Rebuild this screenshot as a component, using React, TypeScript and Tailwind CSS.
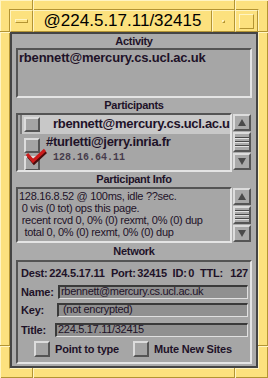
import React from 'react';

const RAISED =
  'border-2 border-t-[#dcdcdc] border-l-[#dcdcdc] border-b-[#555555] border-r-[#555555]';
const INSET =
  'border-2 border-t-[#545454] border-l-[#545454] border-b-[#e4e4e4] border-r-[#e4e4e4]';
const YRAISED =
  'border border-t-[#fff4c2] border-l-[#fff4c2] border-b-[#b39433] border-r-[#b39433]';
const TXT = 'text-[#1e1228]';

function Arrow({ down }: { down?: boolean }) {
  return (
    <div className={`h-[17px] w-[18px] flex items-center justify-center bg-[#a9a9a9] ${RAISED}`}>
      <svg width="8" height="7" viewBox="0 0 8 7">
        {down ? (
          <polygon points="0,0 8,0 4,7" fill="#4a4a4a" />
        ) : (
          <polygon points="4,0 8,7 0,7" fill="#4a4a4a" />
        )}
      </svg>
    </div>
  );
}

function Thumb({ className }: { className: string }) {
  return (
    <div className={`mt-[1px] w-[18px] bg-[#a9a9a9] ${RAISED} flex flex-col justify-center gap-[2px] ${className}`}>
      {[0, 1, 2].map((i) => (
        <div key={i} className="h-[2px] border-t border-b border-t-[#4a4a4a] border-b-[#e2e2e2]" />
      ))}
    </div>
  );
}

function ScrollBar({ thumb }: { thumb: string }) {
  return (
    <div className="ml-[1px] w-[18px] flex flex-col pt-[1px]">
      <Arrow />
      <Thumb className={thumb} />
      <div className="mt-[1px]">
        <Arrow down />
      </div>
    </div>
  );
}

function CheckBtn({ className = '' }: { className?: string }) {
  return <div className={`shrink-0 w-[16px] bg-[#a4a4a4] ${RAISED} ${className}`} />;
}

export default function App() {
  return (
    <div className="relative w-[268px] h-[378px] bg-[#fce17e] p-[9px] shadow-[inset_1px_1px_0_#fff4c2,inset_-1px_-1px_0_#b39433] font-['Liberation_Sans',Arial,sans-serif]">
      {/* frame corner grooves */}
      <div className="absolute left-[32px] top-0 w-[2px] h-[10px] border-l border-r border-l-[#b39433] border-r-[#fff4c2]" />
      <div className="absolute left-[234px] top-0 w-[2px] h-[10px] border-l border-r border-l-[#b39433] border-r-[#fff4c2]" />
      <div className="absolute left-[32px] top-[368px] w-[2px] h-[10px] border-l border-r border-l-[#b39433] border-r-[#fff4c2]" />
      <div className="absolute left-[234px] top-[368px] w-[2px] h-[10px] border-l border-r border-l-[#b39433] border-r-[#fff4c2]" />
      <div className="absolute left-0 top-[31px] w-[10px] h-[2px] border-t border-b border-t-[#b39433] border-b-[#fff4c2]" />
      <div className="absolute left-[258px] top-[31px] w-[10px] h-[2px] border-t border-b border-t-[#b39433] border-b-[#fff4c2]" />
      <div className="absolute left-0 top-[345px] w-[10px] h-[2px] border-t border-b border-t-[#b39433] border-b-[#fff4c2]" />
      <div className="absolute left-[258px] top-[345px] w-[10px] h-[2px] border-t border-b border-t-[#b39433] border-b-[#fff4c2]" />

      <div className="w-full h-full flex flex-col border border-t-[#b39433] border-l-[#b39433] border-b-[#fff4c2] border-r-[#fff4c2]">
        {/* title bar */}
        <div className="h-[22px] flex shrink-0">
          <div className={`w-[23px] flex items-center justify-center ${YRAISED}`}>
            <div className={`w-[13px] h-[4px] ${YRAISED}`} />
          </div>
          <div className={`flex-1 flex items-center justify-center text-[17px] leading-[20px] text-black ${YRAISED}`}>
            @224.5.17.11/32415
          </div>
          <div className={`w-[23px] flex items-center justify-center ${YRAISED}`}>
            <div className={`w-[3px] h-[3px] ${YRAISED}`} />
          </div>
          <div className={`w-[23px] flex items-center justify-center ${YRAISED}`}>
            <div className={`w-[15px] h-[15px] ${YRAISED}`} />
          </div>
        </div>

        {/* gray body */}
        <div className={`flex-1 flex flex-col bg-[#ababab] border-2 border-[#444444] px-[4px] ${TXT}`}>
          <div className="h-[14px] leading-[14px] text-center text-[11px] font-bold tracking-[-0.3px]">Activity</div>
          <div className={`h-[50px] bg-[#a6a6a6] ${INSET} pl-[1px] text-[13px] leading-[15px] font-bold tracking-[-0.2px]`}>
            rbennett@mercury.cs.ucl.ac.uk
          </div>

          <div className="h-[15px] leading-[15px] text-center text-[11px] font-bold tracking-[-0.3px]">Participants</div>
          <div className="h-[59px] flex">
            <div className={`w-[216px] bg-[#a6a6a6] ${INSET} overflow-hidden flex flex-col`}>
              <div className="h-[19px] ml-[2px] flex items-start bg-[#c8c8c8] border-l-2 border-l-[#7c7c7c]">
                <CheckBtn className="ml-[2px] mt-[2px] h-[15px]" />
                <div className="ml-[13px] mt-[1px] whitespace-nowrap text-[13px] leading-[15px] font-bold tracking-[-0.3px]">
                  rbennett@mercury.cs.ucl.ac.uk
                </div>
              </div>
              <div className="h-[18px] pl-[6px] flex items-start">
                <CheckBtn className="mt-[4px] h-[15px]" />
                <div className="ml-[6px] whitespace-nowrap text-[13px] leading-[15px] font-bold tracking-[-0.3px]">
                  #turletti@jerry.inria.fr
                </div>
              </div>
              <div className="h-[18px] pl-[6px] flex items-start">
                <div className="relative shrink-0 mt-[4px]">
                  <CheckBtn className="h-[15px]" />
                  <svg className="absolute left-0 top-[-8px]" width="24" height="18" viewBox="0 0 24 18">
                    <polyline points="3,7 9,14 21,3" fill="none" stroke="#4a0c0c" strokeWidth="3" transform="translate(1,1)" />
                    <polyline points="3,6 9,13 21,2" fill="none" stroke="#cc1c1c" strokeWidth="3.2" />
                  </svg>
                </div>
                <div className="ml-[13px] whitespace-nowrap font-['Liberation_Mono',monospace] text-[10px] leading-[12px] font-bold text-[#463c4c]">
                  128.16.64.11
                </div>
              </div>
            </div>
            <ScrollBar thumb="h-[20px]" />
          </div>

          <div className="h-[15px] leading-[15px] text-center text-[11px] font-bold tracking-[-0.3px]">Participant Info</div>
          <div className="h-[56px] flex">
            <div className={`w-[216px] bg-[#a6a6a6] ${INSET} overflow-hidden pt-[1px] pl-[1px] text-[11px] leading-[12px] tracking-[-0.3px] whitespace-pre`}>
              <div>128.16.8.52 @ 100ms, idle ??sec.</div>
              <div> 0 vis (0 tot) ops this page.</div>
              <div> recent rcvd 0, 0% (0) rexmt, 0% (0) dup</div>
              <div>  total 0, 0% (0) rexmt, 0% (0) dup</div>
            </div>
            <ScrollBar thumb="h-[18px]" />
          </div>

          <div className="h-[17px] leading-[17px] text-center text-[11px] font-bold tracking-[-0.3px]">Network</div>
          <div className={`h-[104px] bg-[#a6a6a6] ${INSET} flex flex-col pt-[4px] pl-[3px] pr-[2px] text-[11px]`}>
            <div className="h-[14px] leading-[14px] flex font-bold tracking-[-0.2px] whitespace-nowrap">
              <span className="w-[29px]">Dest:</span>
              <span className="w-[63px]">224.5.17.11</span>
              <span className="w-[27px]">Port:</span>
              <span className="w-[36px]">32415</span>
              <span className="w-[16px]">ID:</span>
              <span className="w-[12px]">0</span>
              <span className="w-[31px]">TTL:</span>
              <span>127</span>
            </div>
            <div className="mt-[5px] h-[14px] flex items-center">
              <span className="w-[37px] font-bold tracking-[-0.2px]">Name:</span>
              <div className="flex-1 h-[14px] bg-[#909090] border-t-2 border-l-2 border-b border-r border-t-[#3a3a3a] border-l-[#3a3a3a] border-b-[#e0e0e0] border-r-[#e0e0e0] pl-[1px] leading-[9px] tracking-[-0.3px] whitespace-nowrap">
                rbennett@mercury.cs.ucl.ac.uk
              </div>
            </div>
            <div className="mt-[4px] h-[14px] flex items-center">
              <span className="w-[36px] font-bold tracking-[-0.2px]">Key:</span>
              <div className="flex-1 h-[14px] bg-[#909090] border-t-2 border-l-2 border-b border-r border-t-[#3a3a3a] border-l-[#3a3a3a] border-b-[#e0e0e0] border-r-[#e0e0e0] pl-[4px] leading-[9px] tracking-[-0.3px] whitespace-nowrap">
                (not encrypted)
              </div>
            </div>
            <div className="mt-[6px] h-[14px] flex items-center">
              <span className="w-[34px] font-bold tracking-[-0.2px]">Title:</span>
              <div className="flex-1 h-[14px] bg-[#909090] border-t-2 border-l-2 border-b border-r border-t-[#3a3a3a] border-l-[#3a3a3a] border-b-[#e0e0e0] border-r-[#e0e0e0] pl-[1px] leading-[9px] tracking-[-0.3px] whitespace-nowrap">
                224.5.17.11/32415
              </div>
            </div>
            <div className="mt-[4px] h-[16px] flex items-center font-bold tracking-[-0.2px] whitespace-nowrap">
              <CheckBtn className="ml-[13px] h-[16px]" />
              <span className="ml-[5px] w-[78px]">Point to type</span>
              <CheckBtn className="h-[16px]" />
              <span className="ml-[5px]">Mute New Sites</span>
            </div>
          </div>
        </div>
      </div>
    </div>
  );
}
